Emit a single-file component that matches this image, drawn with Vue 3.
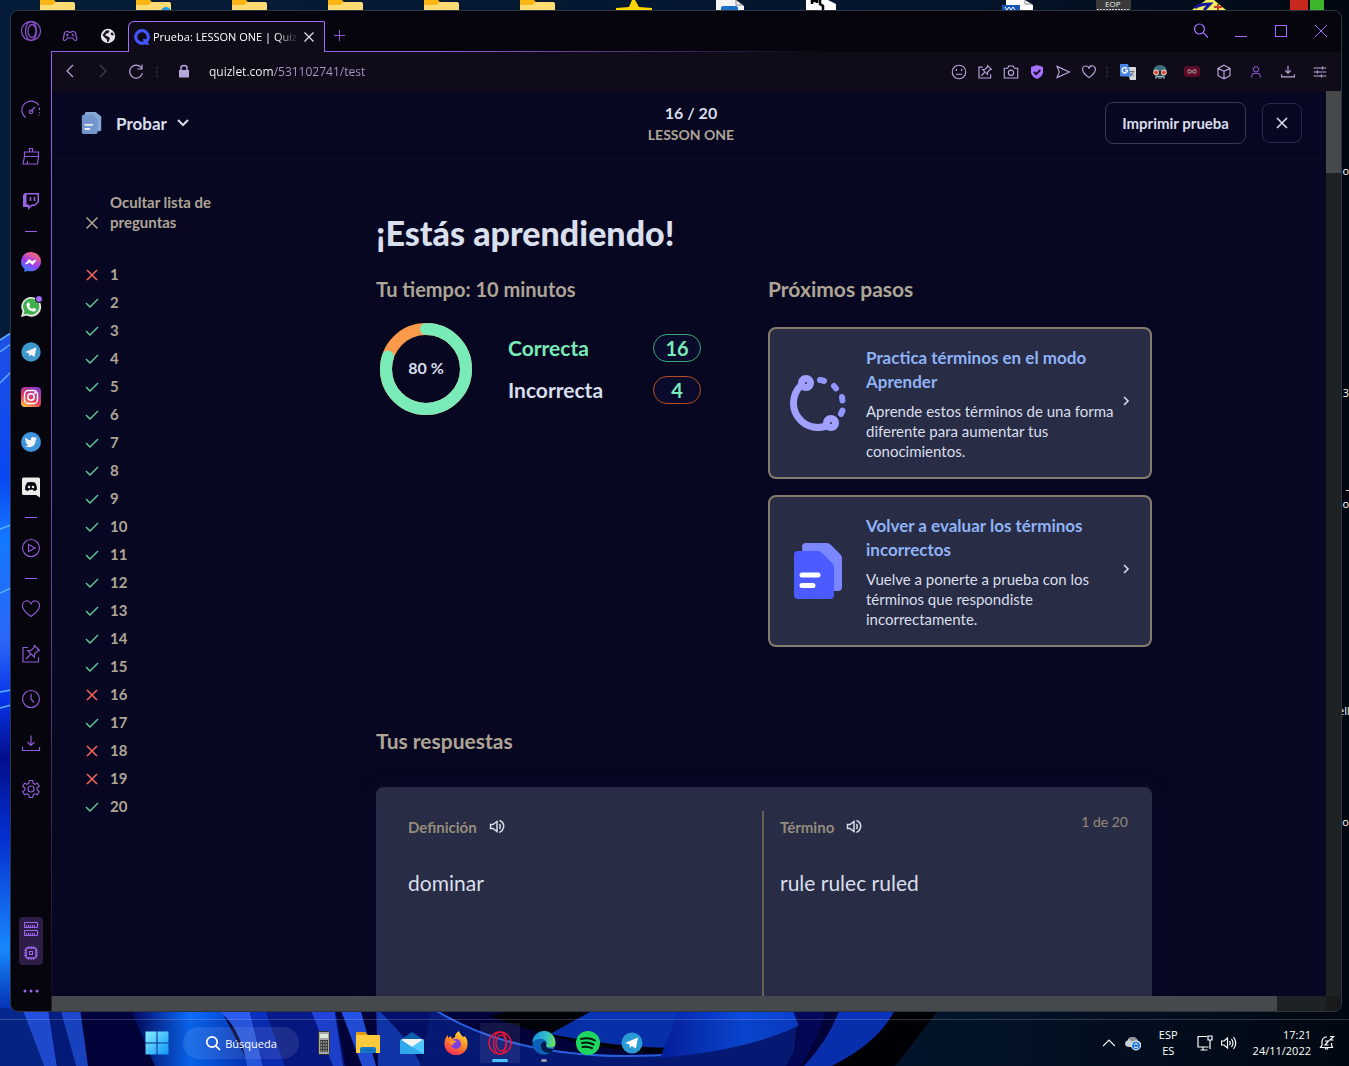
<script setup>
import { ref } from 'vue'

const address = ref('quizlet.com/531102741/test')

const wrong = [1, 16, 18, 19]
const questions = Array.from({ length: 20 }, (_, i) => ({
  n: i + 1,
  ok: !wrong.includes(i + 1),
}))

const folders = [1, 2, 3, 4, 5, 6]

const line = {
  speed: 'M7 18.6A9 9 0 1 1 19.6 6.4M20.4 8.5v2.500M20.500 13v1M20 15.500v1M12 12.500l4-4.500M10.200 12.800a1.800 1.800 0 1 0 3.600 0a1.800 1.800 0 1 0-3.600 0',
  broom: 'M10.500 8V4.500h3V8M5.500 8h14v4.500h-14zM5.500 12.500L4 20h14.500l1-7.500M8.500 17v3',
  play: 'M3.500 12a8.500 8.500 0 1 0 17 0a8.500 8.500 0 1 0-17 0M9.500 8.500v7l6.500-3.500z',
  heart: 'M12 19.500C5 14.500 3.500 11.500 3.500 9A4.300 4.300 0 0 1 12 7.500A4.300 4.300 0 0 1 20.500 9C20.500 11.500 19 14.500 12 19.500z',
  pin: 'M9 5.500H4v14.500h15.500V15M15.500 3.500l5 5l-2 .5l-2.800 2.800l-.4 3.400l-6.500-6.500l3.400-.4L15 5.500zM11.500 12.500L7 17',
  clock: 'M3.500 12a8.500 8.500 0 1 0 17 0a8.500 8.500 0 1 0-17 0M12 7v5l3 3.500',
  download: 'M12 3.500v9.500M8.500 10l3.500 3.500l3.500-3.500M3.500 15v3.500h17V15',
  gear: 'M10.300 3.500h3.400l.4 2.700l1.900 1.100l2.500-1l1.700 3l-2.100 1.700v2l2.100 1.700l-1.700 3l-2.500-1l-1.900 1.100l-.4 2.700h-3.400l-.4-2.700l-1.900-1.100l-2.500 1l-1.700-3l2.100-1.700v-2L3.800 9.300l1.700-3l2.500 1l1.900-1.100zM9 12a3 3 0 1 0 6 0a3 3 0 1 0-6 0',
  smile: 'M3 12a9 9 0 1 0 18 0a9 9 0 1 0-18 0M8.500 8v2.500M15.500 8v2.500M8 15h8',
  camera: 'M3 7h4.500l1.500-3h6l1.500 3H21v13H3zM8.500 13a3.500 3.500 0 1 0 7 0a3.500 3.500 0 1 0-7 0',
  send: 'M4 4.500L20.500 12L4 19.500L7 12z',
  cube: 'M12 3l8 4v10l-8 4l-8-4V7zM4 7l8 4l8-4M12 11v10',
  person: 'M8 8a4 4 0 1 0 8 0a4 4 0 1 0-8 0M5.500 20.500V18c0-3 2.500-4 6.500-4s6.500 1 6.500 4v2.500',
  sliders: 'M2.500 6h19M2.500 12h19M2.500 18h19M16 3.500v5M8 9.500v5M14 15.500v5',
}

const toolsA = ['smile', 'pin', 'camera']
const steps = [
  {
    icon: 'learn',
    title: 'Practica términos en el modo Aprender',
    text: 'Aprende estos términos de una forma diferente para aumentar tus conocimientos.',
  },
  {
    icon: 'test',
    title: 'Volver a evaluar los términos incorrectos',
    text: 'Vuelve a ponerte a prueba con los términos que respondiste incorrectamente.',
  },
]
const sides = [
  { label: 'Definición', value: 'dominar' },
  { label: 'Término', value: 'rule rulec ruled' },
]
</script>

<template>
  <div class="desktop">
    <svg class="wallpaper" viewBox="0 0 1349 1066" preserveAspectRatio="none" aria-hidden="true">
      <defs>
        <linearGradient id="sky" x1="0" y1="0" x2="1" y2="0">
          <stop offset="0" stop-color="#051d3a" /><stop offset="0.700" stop-color="#04152c" /><stop offset="1" stop-color="#020812" />
        </linearGradient>
        <linearGradient id="side" x1="0" y1="0" x2="0" y2="1">
          <stop offset="0" stop-color="#1f4fe6" /><stop offset="0.200" stop-color="#0a48f2" /><stop offset="0.280" stop-color="#1478ff" />
          <stop offset="0.420" stop-color="#2c66f8" /><stop offset="0.500" stop-color="#0734e8" /><stop offset="0.580" stop-color="#030f8c" />
          <stop offset="0.690" stop-color="#0530d0" /><stop offset="0.840" stop-color="#1888fb" /><stop offset="0.920" stop-color="#0534b8" /><stop offset="1" stop-color="#04268f" />
        </linearGradient>
        <linearGradient id="glow" x1="0" y1="0" x2="1" y2="0">
          <stop offset="0" stop-color="#03045a" /><stop offset="0.500" stop-color="#0a6cff" /><stop offset="1" stop-color="#0634c0" />
        </linearGradient>
        <linearGradient id="fold" x1="0" y1="0" x2="1" y2="0">
          <stop offset="0" stop-color="#0520a8" /><stop offset="0.600" stop-color="#0b4be0" /><stop offset="1" stop-color="#0a3fd0" />
        </linearGradient>
      </defs>
      <rect width="1349" height="1066" fill="url(#sky)" />
      <path d="M0 340L11 333V1066H0z" fill="url(#side)" />
      <path d="M0 340L11 333M0 352L11 344M0 383L11 372M0 529L11 525M0 593L11 588M0 692L11 690M0 708L11 705" stroke="#58b0ff" stroke-width="1.500" />
      <path d="M0 1008H940L895 1066H0z" fill="#02023c" />
      <path d="M0 1008H22L44 1066H0z" fill="#06268f" />
      <path d="M22 1008h26l9 58h-13z" fill="#2350e0" />
      <path d="M48 1008h12l16 58h-19z" fill="#041c84" />
      <path d="M60 1008h20l8 58h-12z" fill="#1b48cf" />
      <path d="M130 1008h90l30 58h-95z" fill="url(#glow)" />
      <path d="M215 1008h34l14 58h-16q-6-40-32-58z" fill="#2a5cf0" />
      <path d="M249 1008h16l20 58h-22z" fill="#0a2fc0" />
      <path d="M265 1008h70l10 58h-60z" fill="#071a8c" />
      <path d="M310 1008h24l9 58h-10z" fill="#2145dc" />
      <path d="M340 1008h20l16 58h-14z" fill="#2552e6" />
      <path d="M376 1008q30 26 46 58h-44z" fill="#1238b4" />
      <path d="M376 1008h56q90 60 248 52v6H422q-16-32-46-58z" fill="#03106e" />
      <path d="M520 1008h160v46q-90 0-190-38z" fill="#010208" />
      <path d="M590 1012h90v36q-60 0-130-14z" fill="#0733b8" />
      <path d="M432 1008q90 56 248 46q60-8 117-30l-4 42H420z" fill="#061a7c" />
      <path d="M432 1008q90 58 248 46" fill="none" stroke="#2a66f0" stroke-width="2" />
      <path d="M680 1008h112q8 8 6 18q-50 24-138 32z" fill="url(#fold)" />
      <path d="M798 1024q2 20-12 42h14q20-30 26-58h-34z" fill="#03085c" />
      <path d="M840 1008h56q-16 34-64 58h-28q26-28 36-58z" fill="#0a32bc" />
      <path d="M896 1008h44l-45 58h-63q48-24 64-58z" fill="#000003" />
    </svg>

    <div class="edge-labels" aria-hidden="true">
      <span style="top: 163px">o</span>
      <span style="top: 385px">3</span>
      <span style="top: 481px">-</span>
      <span style="top: 496px">o</span>
      <span style="top: 703px">ell</span>
      <span style="top: 814px">io</span>
    </div>

    <div class="shortcuts" aria-hidden="true">
      <svg v-for="f in folders" :key="f" viewBox="0 0 96 10">
        <path d="M30 0h14l3 3h15q3 0 3 3v4H30z" fill="#fbb615" />
        <path d="M30 5h12l4-3h17q2 0 2 2v6H30z" fill="#ffdc73" />
        <circle v-if="f === 2" cx="60" cy="12" r="5" fill="#1e9be0" />
      </svg>
      <svg viewBox="0 0 96 10"><path d="M30 8l13-1l3-7h3l4 7l13 1v2H30z" fill="#ffd500" /></svg>
      <svg viewBox="0 0 96 10"><path d="M34 0h20l8 6v4H34z" fill="#f4f4f4" /><path d="M54 0v5h7" fill="none" stroke="#888" /><rect x="39" y="6" width="17" height="6" rx="2" fill="#1d6fc9" /></svg>
      <svg viewBox="0 0 96 10"><path d="M28 0h22l8 4v6H28z" fill="#fff" /><path d="M34 4V1h5V3M42 0v4l3 2v4" fill="none" stroke="#000" stroke-width="2.500" /></svg>
      <svg viewBox="0 0 96 10"></svg>
      <svg viewBox="0 0 96 10"><path d="M36 0h19l8 5v5H36z" fill="#fff" /><path d="M55 0v4h7" fill="none" stroke="#888" /><rect x="32" y="5" width="18" height="6" fill="#1757b8" /><path d="M35 7l2 3l2-3l2 3l2-3l2 3" stroke="#fff" fill="none" /></svg>
      <svg viewBox="0 0 96 10"><rect x="30" width="35" height="10" fill="#3a3a3a" /><path d="M31 9.500h33" stroke="#ccc" stroke-dasharray="2 1" /><text x="39" y="7" font-size="8" fill="#eee">EOP</text></svg>
      <svg viewBox="0 0 96 10"><path d="M30 10L44 0h8l12 10z" fill="#f4ec5e" /><path d="M33 8q4-4 15-4l-6 6" fill="none" stroke="#16189a" stroke-width="3" /><path d="M56 4v6M52 7h8" stroke="#c0392b" stroke-width="2" /></svg>
      <svg viewBox="0 0 96 10"><rect x="32" width="18" height="10" fill="#c8281e" /><rect x="52" width="14" height="10" fill="#3fb52c" /></svg>
    </div>

    <div class="window">
      <nav class="rail" aria-label="Barra lateral">
        <a class="rail-logo" href="#" aria-label="Opera GX">
          <svg class="i22" viewBox="0 0 22 22" fill="none" stroke="#8450c4" stroke-width="1.300"><circle cx="11" cy="11" r="9.500" /><ellipse cx="11" cy="11" rx="5.500" ry="9.500" /><ellipse cx="12" cy="11" rx="4" ry="6.500" /></svg>
        </a>
        <a class="rail-item" href="#" aria-label="GX Control"><svg class="i24 ln" viewBox="0 0 24 24"><path :d="line.speed" /></svg></a>
        <a class="rail-item" href="#" aria-label="GX Cleaner"><svg class="i24 ln" viewBox="0 0 24 24"><path :d="line.broom" /></svg></a>
        <a class="rail-item" href="#" aria-label="Twitch">
          <svg class="i24" viewBox="0 0 24 24"><path d="M4 6l2-2h14v9l-4 4h-3l-4 4v-3H4z" fill="#9a62e4" /><path d="M7.500 5.500h11v7l-3 3h-3l-2 2v-2h-3z" fill="#06040c" /><path d="M11.500 8v4M15.500 8v4" stroke="#9a62e4" stroke-width="1.500" /></svg>
        </a>
        <span class="dash"></span>
        <a class="rail-item" href="#" aria-label="Messenger">
          <svg class="i24" viewBox="0 0 24 24"><defs><linearGradient id="ms" x1="0.200" y1="1" x2="0.700" y2="0"><stop offset="0" stop-color="#1f8fff" /><stop offset="0.450" stop-color="#9a3cf0" /><stop offset="1" stop-color="#ff6a70" /></linearGradient></defs><path d="M12 2a10 9.600 0 0 1 0 19.300q-2 0-3.500-.5L5.500 22v-3A9.700 9.700 0 0 1 12 2z" fill="url(#ms)" /><path d="M6.500 14l3.500-4.500l3 2.300l4-1.800l-3.300 4.500l-3-2.300z" fill="#fff" stroke="#fff" stroke-linejoin="round" /></svg>
        </a>
        <a class="rail-item" href="#" aria-label="WhatsApp">
          <svg class="i24" viewBox="0 0 24 24"><path d="M2 22l1.500-5.500A9.900 9.900 0 1 1 7.600 20.600z" fill="#e8e8e8" /><path d="M4.500 19.500l1-3.300a8.100 8.100 0 1 1 3 2.600z" fill="#3fb04d" /><path d="M8.500 7.500l1.500-.3l1.200 2.800l-1 1.200q1 2 3 2.800l1.300-1.300l2.600 1.300q0 2.500-2.800 2.600q-6-1-6.800-6.300q0-1.500 1-2.800z" fill="#fff" /><circle cx="20" cy="4" r="3.500" fill="#a56eff" stroke="#06040c" /></svg>
        </a>
        <a class="rail-item" href="#" aria-label="Telegram">
          <svg class="i24" viewBox="0 0 24 24"><circle cx="12" cy="12" r="9.700" fill="#3d97cc" /><path d="M6 12l11.500-4.700l-2 9.700l-3.500-2.300l-1.800 1.800l-.4-3.200z" fill="#f2f2f2" /></svg>
        </a>
        <a class="rail-item" href="#" aria-label="Instagram">
          <svg class="i24" viewBox="0 0 24 24"><defs><linearGradient id="ig" x1="0.200" y1="1" x2="0.700" y2="0"><stop offset="0" stop-color="#f8c14a" /><stop offset="0.400" stop-color="#ea3a58" /><stop offset="1" stop-color="#8a3ac8" /></linearGradient></defs><rect x="2" y="2" width="20" height="20" rx="4" fill="url(#ig)" /><rect x="5.500" y="5.500" width="13" height="13" rx="4" fill="none" stroke="#fff" stroke-width="1.500" /><circle cx="12" cy="12" r="3.200" fill="none" stroke="#fff" stroke-width="1.500" /><circle cx="16" cy="8" r="1" fill="#fff" /></svg>
        </a>
        <a class="rail-item" href="#" aria-label="Twitter">
          <svg class="i24" viewBox="0 0 24 24"><circle cx="12" cy="12" r="10" fill="#3d94dc" /><path d="M6.500 7.500q2.300 2.700 5.300 2.700q-.4-3 2.200-3.300q1.300 0 2 .8l1.700-.5l-1 1.500l1.300-.2l-1.300 1.400q0 7-6.700 7.300q-2.500 0-4.200-1.100q2.200 0 3.500-1.200q-1.700-.2-2.200-1.700h1q-2-.8-1.900-2.500l1 .2q-1.600-1.400-.7-3.400z" fill="#f2f2f2" /></svg>
        </a>
        <a class="rail-item" href="#" aria-label="Discord">
          <svg class="i24" viewBox="0 0 24 24"><path d="M4.500 2.500h15q1.500 0 1.500 1.500v18.500L17 20H4.500Q3 20 3 18.500V4q0-1.500 1.500-1.500z" fill="#ececec" /><path d="M8 7.500q4-1.200 8 0q2.200 3.300 2 7q-1.700 1.500-3.200 1.500l-.8-1.300h-4L9.200 16Q7.700 16 6 14.500q-.2-3.700 2-7z" fill="#06040c" /><circle cx="10" cy="12" r="1.300" fill="#ececec" /><circle cx="14" cy="12" r="1.300" fill="#ececec" /></svg>
        </a>
        <span class="dash"></span>
        <a class="rail-item" href="#" aria-label="Reproductor"><svg class="i24 ln" viewBox="0 0 24 24"><path :d="line.play" /></svg></a>
        <span class="dash"></span>
        <a v-for="name in ['heart', 'pin', 'clock', 'download', 'gear']" :key="name" class="rail-item" href="#" :aria-label="name">
          <svg class="i24 ln" viewBox="0 0 24 24"><path :d="line[name]" /></svg>
        </a>
        <div class="gauges">
          <svg class="i16" viewBox="0 0 16 16" fill="none" stroke="#9d68ee"><path d="M1.500 1.500h13v5h-13zM1.500 9.500h13v5h-13zM3.500 6V4M5.500 6V4M7.500 6V4M9.500 6V4M11.500 6V4M3.500 14v-2M5.500 14v-2M7.500 14v-2M9.500 14v-2M11.500 14v-2" /></svg>
          <svg class="i16" viewBox="0 0 16 16" fill="none" stroke="#9d68ee"><rect x="3" y="3" width="10" height="10" rx="1" stroke-width="1.500" /><rect x="6.500" y="6.500" width="3" height="3" /><path d="M5.500 1v2M8 1v2M10.500 1v2M5.500 13v2M8 13v2M10.500 13v2M1 5.500h2M1 8h2M1 10.500h2M13 5.500h2M13 8h2M13 10.500h2" /></svg>
        </div>
        <button class="rail-more" type="button" aria-label="Más"><svg class="i16" viewBox="0 0 16 16" fill="#9d68ee"><circle cx="2" cy="8" r="1.500" /><circle cx="8" cy="8" r="1.500" /><circle cx="14" cy="8" r="1.500" /></svg></button>
      </nav>

      <div class="frame">
        <header class="tabs">
          <div class="pinned">
            <button type="button" aria-label="GX Corner"><svg class="i16" viewBox="0 0 16 16" fill="none" stroke="#8d5cd0" stroke-width="1.200"><path d="M4.500 3.500h1.800l.8.800h1.800l.8-.8h1.800q1.500 0 2 1.500l1.200 5.500q.3 2-1.200 2q-1 0-1.800-1L10.500 10h-5L4.300 11.500q-.8 1-1.800 1q-1.500 0-1.200-2L2.500 5q.5-1.500 2-1.500zM5.300 5.500v3M3.800 7h3M9.500 7h1.500M11 5.500v3" /></svg></button>
            <button type="button" aria-label="Sitio web"><svg class="i16" viewBox="0 0 16 16"><circle cx="8" cy="8" r="7.200" fill="#e6e4ea" /><path d="M6 2.500l3.500 0l-1 2.500l-2 .5L5 7.500l3 1l2 1.500l-1 3l-2 1.500v-3L4.500 9.500L2.500 7zM12 4l2 3l-2 .5l-1.500-1.500z" fill="#15101f" /></svg></button>
          </div>
          <div class="tab">
            <svg class="i16" viewBox="0 0 16 16"><circle cx="8" cy="8" r="6.300" fill="none" stroke="#4255ff" stroke-width="3.200" /><path d="M8.500 10h3l4 5.800h-4z" fill="#4255ff" /></svg>
            <span class="tab-title">Prueba: LESSON ONE | Quiz</span>
            <button type="button" aria-label="Cerrar pestaña"><svg class="i12" viewBox="0 0 12 12" stroke="#e4e0ee" stroke-width="1.200"><path d="M1.500 1.500l9 9M10.500 1.500l-9 9" /></svg></button>
          </div>
          <div class="after-tab">
            <button type="button" aria-label="Nueva pestaña"><svg class="i12" viewBox="0 0 12 12" stroke="#8a58cc"><path d="M5.500 0v11M0 5.500h11" /></svg></button>
            <div class="controls">
              <button type="button" aria-label="Buscar pestañas"><svg class="i16" viewBox="0 0 16 16" fill="none" stroke="#a56eff" stroke-width="1.200"><circle cx="6.500" cy="6" r="5" /><path d="M10.200 9.700L15 14.500" /></svg></button>
              <button type="button" aria-label="Minimizar"><svg class="i12" viewBox="0 0 12 12" stroke="#a56eff"><path d="M0 11.500h12" /></svg></button>
              <button type="button" aria-label="Maximizar"><svg class="i12" viewBox="0 0 12 12" stroke="#a56eff" fill="none"><rect x="0.500" y="0.500" width="11" height="11" /></svg></button>
              <button type="button" aria-label="Cerrar"><svg class="i12" viewBox="0 0 12 12" stroke="#a56eff"><path d="M0 0l12 12M12 0L0 12" /></svg></button>
            </div>
          </div>
        </header>

        <div class="toolbar">
          <button type="button" aria-label="Atrás"><svg class="i16" viewBox="0 0 16 16" fill="none" stroke="#b7a9dd" stroke-width="1.200"><path d="M11 1L5 7l6 6" /></svg></button>
          <button type="button" aria-label="Adelante"><svg class="i16" viewBox="0 0 16 16" fill="none" stroke="#453c56" stroke-width="1.200"><path d="M5 1l6 6l-6 6" /></svg></button>
          <button type="button" aria-label="Recargar"><svg class="i16" viewBox="0 0 16 16" fill="none" stroke="#b7a9dd" stroke-width="1.200"><path d="M13.500 4A6.500 6.500 0 1 0 14.500 9M14 .5V5H9.500" /></svg></button>
          <span class="sep"></span>
          <svg class="i16 lock" viewBox="0 0 16 16"><path d="M3 6h10v7q0 .5-.5.500h-9q-.5 0-.5-.5z" fill="#b7a9dd" /><path d="M5 6.500V4q0-2.500 3-2.500t3 2.500v2.500" fill="none" stroke="#b7a9dd" stroke-width="1.500" /></svg>
          <input v-model="address" class="address" type="text" aria-label="Dirección" />
          <div class="tools">
            <button v-for="t in toolsA" :key="t" type="button" :aria-label="t"><svg class="i18 lt" viewBox="0 0 24 24"><path :d="line[t]" /></svg></button>
            <button type="button" aria-label="Bloqueador"><svg class="i16" viewBox="0 0 16 16"><path d="M8 1l6 2v5.500Q13.500 12.500 8 15Q2.500 12.500 2 8.500V3z" fill="#a56eff" /><path d="M5 8l2.200 2.200L11.300 6" fill="none" stroke="#150d24" stroke-width="1.800" /></svg></button>
            <button type="button" aria-label="Enviar"><svg class="i18 lt" viewBox="0 0 24 24"><path :d="line.send" /></svg></button>
            <button type="button" aria-label="Favoritos"><svg class="i18 lt" viewBox="0 0 24 24"><path :d="line.heart" /></svg></button>
          </div>
          <span class="sep"></span>
          <div class="extensions">
            <button type="button" aria-label="Traductor"><svg class="i16" viewBox="0 0 16 16"><path d="M6 3h9q1 0 1 1v12h-6z" fill="#d8d8d8" /><path d="M9.500 7.500h5M12 6.500v1M13.500 7.500q-1 3-3 4.500M11 9q1.500 2.500 3 3" stroke="#777" fill="none" /><path d="M0 0h8l3.500 12.500H1q-1 0-1-1z" fill="#4a86e8" /><path d="M7 4.700A2.700 2.700 0 1 0 7.500 6.500H5.200" fill="none" stroke="#fff" stroke-width="1.300" /></svg></button>
            <button type="button" aria-label="Extensión"><svg class="i16" viewBox="0 0 16 16"><path d="M1 7Q2 1 8 1t7 6z" fill="#3e6f7c" /><path d="M3 10h10v4H3z" fill="#264c58" /><circle cx="4.200" cy="8.500" r="2.500" fill="#d84a35" stroke="#f6e4da" /><circle cx="11.800" cy="8.500" r="2.500" fill="#d84a35" stroke="#f6e4da" /><path d="M4 15v-2.500h8V15M7 13v2M9 13v2" stroke="#8fb0b4" fill="none" /></svg></button>
            <button type="button" aria-label="Grabadora"><svg class="i16" viewBox="0 0 16 16"><rect y="2" width="16" height="11" rx="3" fill="#5c0d28" /><path d="M8 7.500q-4-3.500-4 0t4 0t4 0t-4 0" fill="none" stroke="#98707c" stroke-width="1.300" /></svg></button>
            <button type="button" aria-label="Extensiones"><svg class="i18 lt" viewBox="0 0 24 24"><path :d="line.cube" /></svg></button>
            <button type="button" aria-label="Perfil"><svg class="i16 lt vio" viewBox="0 0 24 24"><path :d="line.person" /></svg></button>
            <button type="button" aria-label="Descargas"><svg class="i18 lt" viewBox="0 0 24 24"><path :d="line.download" /></svg></button>
            <button type="button" aria-label="Configuración"><svg class="i16 lt" viewBox="0 0 24 24"><path :d="line.sliders" /></svg></button>
          </div>
        </div>

        <div class="viewport">
          <div class="page">
            <header class="top">
              <button class="mode" type="button">
                <svg class="i24" viewBox="0 0 24 26"><path d="M4 3q0-2 2-2h10l6 5v14q0 2-2 2H6z" fill="#86a8d4" /><path d="M1 6q0-2 2-2h10l5 5v14q0 2-2 2H3q-2 0-2-2z" fill="#7396cc" /><path d="M4 15h9M4 19.500h6" stroke="#e8edf6" stroke-width="2" /></svg>
                Probar
                <svg class="i12 chev" viewBox="0 0 12 12" fill="none" stroke="#d9dde8" stroke-width="2"><path d="M1 3l5 5l5-5" /></svg>
              </button>
              <div class="score">
                <strong>16 / 20</strong>
                <span>LESSON ONE</span>
              </div>
              <div class="actions">
                <button class="print" type="button">Imprimir prueba</button>
                <button class="close" type="button" aria-label="Cerrar"><svg class="i12" viewBox="0 0 12 12" stroke="#d9dde8" stroke-width="1.600"><path d="M1 1l10 10M11 1L1 11" /></svg></button>
              </div>
            </header>

            <div class="body">
              <aside class="list">
                <button class="hide" type="button">
                  <svg class="i16" viewBox="0 0 16 16" stroke="#aea596" stroke-width="1.500"><path d="M2.500 1.500l11 11M13.500 1.500l-11 11" /></svg>
                  <span>Ocultar lista de preguntas</span>
                </button>
                <ol>
                  <li v-for="q in questions" :key="q.n">
                    <svg v-if="q.ok" class="i16" viewBox="0 0 16 16" fill="none" stroke="#62cf9d" stroke-width="1.400"><path d="M2 9l4 4l8-8" /></svg>
                    <svg v-else class="i16" viewBox="0 0 16 16" stroke="#f0675c" stroke-width="1.600"><path d="M3 4l10 10M13 4L3 14" /></svg>
                    {{ q.n }}
                  </li>
                </ol>
              </aside>

              <main class="results">
                <h1>¡Estás aprendiendo!</h1>
                <div class="summary">
                  <section>
                    <p class="time">Tu tiempo: 10 minutos</p>
                    <div class="stats">
                      <div class="donut">
                        <svg viewBox="0 0 92 92" fill="none" stroke-width="12">
                          <circle cx="46" cy="46" r="40" stroke="#fa9a4a" />
                          <circle cx="46" cy="46" r="40" stroke="#78ebb8" stroke-linecap="round" stroke-dasharray="201 252" transform="rotate(-90 46 46)" />
                        </svg>
                        <span>80 %</span>
                      </div>
                      <dl>
                        <div class="good"><dt>Correcta</dt><dd>16</dd></div>
                        <div class="bad"><dt>Incorrecta</dt><dd>4</dd></div>
                      </dl>
                    </div>
                  </section>
                  <section>
                    <h2>Próximos pasos</h2>
                    <div class="steps">
                      <a v-for="s in steps" :key="s.icon" class="step" href="#">
                        <svg v-if="s.icon === 'learn'" class="i56" viewBox="0 0 56 56" fill="none">
                          <path d="M10.500 10.900A24.500 24.500 0 0 0 40 49.400" stroke="#9fa0ff" stroke-width="7" />
                          <path d="M30 5q2 0 4 1M44 11l2 2.500M52 22l.5 3.500M52.500 35.500l-1.500 3.500" stroke="#9195ff" stroke-width="6" stroke-linecap="round" />
                          <circle cx="16" cy="8" r="4.500" stroke="#9fa0ff" stroke-width="7" />
                          <circle cx="41" cy="48" r="4.500" stroke="#9fa0ff" stroke-width="7" />
                        </svg>
                        <svg v-else class="i56" viewBox="0 0 56 56">
                          <path d="M12 4q0-4 4-4h21q2 0 4 2l9 9q2 2 2 4v29q0 4-4 4H16z" fill="#7b87ff" />
                          <path d="M4 12q0-4 4-4h20q2 0 4 2l10 10q2 2 2 4v28q0 4-4 4H8q-4 0-4-4z" fill="#4c5bff" />
                          <path d="M12 32h16M12 42.500h11" stroke="#fff" stroke-width="5" stroke-linecap="round" />
                        </svg>
                        <span class="step-copy">
                          <strong>{{ s.title }}</strong>
                          <span>{{ s.text }}</span>
                        </span>
                        <svg class="i16" viewBox="0 0 16 16" fill="none" stroke="#d9dde8" stroke-width="1.600"><path d="M6 2l4 4l-4 4" /></svg>
                      </a>
                    </div>
                  </section>
                </div>

                <h2 class="answers-title">Tus respuestas</h2>
                <article class="answer">
                  <section v-for="side in sides" :key="side.label" class="side">
                    <h3>
                      {{ side.label }}
                      <button type="button" :aria-label="'Escuchar ' + side.label"><svg class="i16" viewBox="0 0 16 16" fill="none" stroke="#d9dde8" stroke-width="1.500"><path d="M1.500 5.500v4H4l4 3v-10l-4 3zM10.500 5q1.500 2.500 0 5M10.500 1.500q5 2 4 7q-.8 3.500-4 5" /></svg></button>
                    </h3>
                    <p>{{ side.value }}</p>
                  </section>
                  <span class="count">1 de 20</span>
                </article>
              </main>
            </div>
          </div>
          <div class="vbar"><span></span></div>
          <div class="hbar"><span></span></div>
          <div class="corner"></div>
        </div>
      </div>
    </div>

    <footer class="taskbar">
      <button class="app" type="button" aria-label="Inicio"><svg class="i24" viewBox="0 0 24 24"><defs><linearGradient id="win" x1="0" y1="0" x2="1" y2="1"><stop offset="0" stop-color="#8af0ff" /><stop offset="1" stop-color="#0a94f5" /></linearGradient></defs><path d="M0.500 0.500h11v11h-11zM12.500 0.500h11v11h-11zM0.500 12.500h11v11h-11zM12.500 12.500h11v11h-11z" fill="url(#win)" /></svg></button>
      <button class="search" type="button"><svg class="i16" viewBox="0 0 16 16" fill="none" stroke="#fff" stroke-width="1.700"><circle cx="7" cy="7" r="5.200" /><path d="M10.800 10.800L15 15" /></svg>Búsqueda</button>
      <button class="app" type="button" aria-label="Calculadora"><svg class="i24" viewBox="0 0 24 24"><rect x="6.500" y="0.500" width="11" height="23" rx="1" fill="#a7a7a7" stroke="#333" /><rect x="8" y="3" width="8" height="4" fill="#dfe8d8" /><rect x="8" y="9" width="8" height="12" fill="#3b3b3b" /><path d="M8.500 11h7M8.500 14h7M8.500 17h7M8.500 20h7" stroke="#ddd" stroke-dasharray="1.500 1" /></svg></button>
      <button class="app" type="button" aria-label="Explorador"><svg class="i24" viewBox="0 0 24 24"><path d="M0 2q0-1 1-1h8l3 3h-12z" fill="#e29a12" /><path d="M0 4h23q1 0 1 1v17H0z" fill="#ffcb3d" /><path d="M4 22v-4q0-2 2-2h12q2 0 2 2v4z" fill="#1678c8" /><path d="M8 19h8" stroke="#0b5596" /></svg></button>
      <button class="app" type="button" aria-label="Correo"><svg class="i24" viewBox="0 0 24 24"><path d="M0 9l12-8l12 8z" fill="#0c5ea8" /><path d="M2 8h20v8H2z" fill="#f4f4f4" /><path d="M0 8l12 8l12-8v15H0z" fill="#2fa8ec" /><path d="M24 8v15L12 16z" fill="#53c9fb" /></svg></button>
      <button class="app" type="button" aria-label="Firefox"><svg class="i24" viewBox="0 0 24 24"><defs><linearGradient id="ff" x1="0.800" y1="0" x2="0.300" y2="1"><stop offset="0" stop-color="#ffe23c" /><stop offset="0.500" stop-color="#ff8a1f" /><stop offset="1" stop-color="#f5255c" /></linearGradient></defs><path d="M15 0q2 5 5 6l1-1q3 4 2.500 8.500A11.500 11 0 0 1 0.500 13Q0.500 7 4 4v3l3-2l1 3l3-2q0-4 4-6z" fill="url(#ff)" /><circle cx="12" cy="13" r="5" fill="#7b3fe4" /><path d="M6 10q4-2 7 1q-4 0-4 3q-3 0-3-4z" fill="#ff9a2a" /></svg></button>
      <button class="app active" type="button" aria-label="Opera GX"><svg class="i24" viewBox="0 0 24 24" fill="none" stroke="#e0173f" stroke-width="1.500"><circle cx="12" cy="12" r="11" /><ellipse cx="12" cy="12" rx="6.500" ry="11" /><ellipse cx="13" cy="12" rx="5" ry="8" /></svg></button>
      <button class="app open" type="button" aria-label="Edge"><svg class="i24" viewBox="0 0 24 24"><defs><linearGradient id="ed" x1="0" y1="0.300" x2="1" y2="0.500"><stop offset="0" stop-color="#1b8ee0" /><stop offset="0.600" stop-color="#35c2c8" /><stop offset="1" stop-color="#6ae05a" /></linearGradient></defs><circle cx="12" cy="12" r="11.500" fill="#0d62b8" /><path d="M0.500 11A11.500 11.500 0 0 1 23.500 12q0 4.500-5 4.500q-4 0-4.500-2q2-3-1-5.500Q7 5.500 0.500 11z" fill="url(#ed)" /><path d="M14 14.500q0 4 8 3.500q-2 3-5 4q-8-1-8-7q0-3 3-4.500q3 1 2 4z" fill="#021b4a" /></svg></button>
      <button class="app" type="button" aria-label="Spotify"><svg class="i24" viewBox="0 0 24 24"><circle cx="12" cy="12" r="12" fill="#1ed760" /><path d="M5 8q8-2 14 1.500M6 12q6-1.500 11.500 1.500M6.500 16q5-1 9.500 1.200" fill="none" stroke="#04150a" stroke-width="2" stroke-linecap="round" /></svg></button>
      <button class="app" type="button" aria-label="Telegram"><svg class="i24" viewBox="0 0 24 24"><circle cx="12" cy="12" r="10.500" fill="#2a9bd6" /><path d="M5 12l13-5.500l-2.200 11l-4-2.500l-2 2l-.4-3.800z" fill="#fff" /></svg></button>

      <div class="tray">
        <button type="button" aria-label="Iconos ocultos"><svg class="i12" viewBox="0 0 12 12" fill="none" stroke="#fff" stroke-width="1.200"><path d="M0 9l6-6l6 6" /></svg></button>
        <button type="button" aria-label="OneDrive"><svg class="i16" viewBox="0 0 16 16"><path d="M3.500 12Q0 11.500 0 8.500q0-2.500 2.500-3Q3.500 2 7.500 2T13 6q2.500 0 3 3v3z" fill="#c9ccd0" /><path d="M4 5q1-3 4-3t5 4q-4-1-5 1q-2-2-4-2z" fill="#8d9196" /><circle cx="11" cy="10.500" r="4.500" fill="#1c78d4" stroke="#fff" /><path d="M8.800 10q1-2 3.200-1.200l1 .8M13.200 11.500q-1 1.800-3.200 1l-1-.8" fill="none" stroke="#fff" /></svg></button>
        <button class="lang" type="button">ESP<br />ES</button>
        <button type="button" aria-label="Red"><svg class="i16" viewBox="0 0 16 16" fill="none" stroke="#fff" stroke-width="1.200"><path d="M10 1.500H1v10.500h10.500M6 12v3M3.500 15h7M11 1h4v4h-4zM13 5v9" /></svg></button>
        <button type="button" aria-label="Volumen"><svg class="i16" viewBox="0 0 16 16" fill="none" stroke="#fff" stroke-width="1.200"><path d="M0.500 6v4h2.500l3.500 3V3L3 6zM8.500 6q1.500 2 0 4M10.500 4q3 4 0 8M12.500 2q4.500 6 0 12" /></svg></button>
        <button class="clock" type="button">17:21<br />24/11/2022</button>
        <button type="button" aria-label="Notificaciones"><svg class="i16" viewBox="0 0 16 16" fill="none" stroke="#fff" stroke-width="1.200"><path d="M8 2q-5 0-5 5v3l-1.500 2.500h12L12.500 10V8M6 13q1.500 2.500 3 0M6 6h3.500L6 10h3.500M11 1.500h3.500L11 5h3.500" /></svg></button>
      </div>
    </footer>
  </div>
</template>

<style>
body {
  margin: 0;
  background: #020812;
}
</style>

<style scoped>
* {
  box-sizing: border-box;
}
button {
  display: flex;
  align-items: center;
  justify-content: center;
  margin: 0;
  padding: 0;
  border: 0;
  background: none;
  color: inherit;
  font: inherit;
}
a {
  color: inherit;
  text-decoration: none;
}
h1,
h2,
h3,
p,
ol,
dl,
dd {
  margin: 0;
  padding: 0;
}
svg {
  display: block;
  flex: none;
}
.i12 { width: 12px; height: 12px; }
.i16 { width: 16px; height: 16px; }
.i18 { width: 18px; height: 18px; }
.i22 { width: 22px; height: 22px; }
.i24 { width: 24px; height: 24px; }
.i56 { width: 56px; height: 56px; }
.ln { fill: none; stroke: #8f5bd6; stroke-width: 1.2; }
.lt { fill: none; stroke: #b7a9dd; stroke-width: 1.5; }
.lt.vio { stroke: #9a5fe6; }

.desktop {
  position: relative;
  display: flex;
  flex-direction: column;
  height: 100vh;
  overflow: hidden;
  isolation: isolate;
  color: #fff;
  font-family: 'Open Sans', 'Noto Sans', sans-serif;
  font-size: 12px;
}
.wallpaper {
  position: absolute;
  inset: 0;
  z-index: -2;
  width: 100%;
  height: 100%;
}
.edge-labels span {
  position: absolute;
  right: 0;
  z-index: -1;
  width: 11px;
  font-size: 11px;
  line-height: 16px;
  text-align: right;
}
.shortcuts {
  display: flex;
  height: 10px;
  padding-left: 10px;
  overflow: hidden;
}
.shortcuts svg {
  width: 96px;
  height: 10px;
}

.window {
  display: flex;
  flex: 1;
  min-height: 0;
  margin: 0 7px 7px 10px;
  overflow: hidden;
  border: 1px solid #2c3540;
  border-radius: 8px;
  background: #06040c;
}
.rail {
  display: flex;
  flex: none;
  flex-direction: column;
  align-items: center;
  width: 40px;
}
.rail-logo {
  display: flex;
  align-items: center;
  height: 40px;
  margin-bottom: 37px;
}
.rail-item {
  display: flex;
  align-items: center;
  height: 45px;
}
.dash {
  width: 12px;
  height: 16px;
  background: linear-gradient(#9a62e4, #9a62e4) center / 12px 1px no-repeat;
}
.gauges {
  display: flex;
  flex-direction: column;
  justify-content: space-around;
  align-items: center;
  width: 24px;
  height: 48px;
  margin-top: auto;
  border-radius: 4px;
  background: #2d1d47;
}
.rail-more {
  width: 40px;
  height: 40px;
  margin-top: 6px;
}

.frame {
  display: flex;
  flex: 1;
  flex-direction: column;
  min-width: 0;
}
.tabs {
  display: flex;
  height: 41px;
}
.pinned {
  display: flex;
  align-items: flex-end;
  width: 77px;
  border-bottom: 1px solid #9a62e4;
}
.pinned button {
  width: 38px;
  height: 30px;
}
.tab {
  display: flex;
  align-items: center;
  width: 197px;
  margin-top: 10px;
  padding: 0 9px 0 5px;
  border: 1px solid #a56eff;
  border-bottom: 0;
  border-radius: 6px 2px 0 0;
  background: #0f0b19;
}
.tab-title {
  flex: 1;
  margin: 0 4px 0 3px;
  font-size: 11px;
  line-height: 16px;
  white-space: nowrap;
  mask-image: linear-gradient(90deg, #000 84%, transparent 100%);
}
.after-tab {
  display: flex;
  flex: 1;
  justify-content: space-between;
  background: linear-gradient(90deg, #9a62e4, #9a62e4 10%, transparent 50%) bottom / 100% 1px no-repeat;
}
.after-tab > button {
  width: 30px;
  margin-top: 8px;
}
.controls {
  display: flex;
}
.controls button {
  width: 40px;
  height: 40px;
}

.toolbar {
  display: flex;
  align-items: center;
  height: 39px;
  padding-left: 1px;
  border-left: 1px solid #9a62e4;
  background: #0f0b19;
}
.toolbar > button {
  width: 33px;
  height: 32px;
}
.sep {
  width: 2px;
  height: 10px;
  margin: 0 4px;
  background: repeating-linear-gradient(#2a2340 0 2px, transparent 2px 4px);
}
.lock {
  margin: 0 17px 0 14px;
}
.address {
  flex: 1;
  min-width: 0;
  margin: 0;
  padding: 0;
  border: 0;
  outline: 0;
  background: linear-gradient(90deg, #fff 65px, #a79bc6 65px);
  background-clip: text;
  -webkit-text-fill-color: transparent;
  font: inherit;
}
.tools {
  display: flex;
}
.tools button {
  width: 26px;
  height: 32px;
}
.extensions {
  display: flex;
  padding-right: 5px;
}
.extensions button {
  width: 32px;
  height: 32px;
}

.viewport {
  display: grid;
  flex: 1;
  grid-template-columns: minmax(0, 1fr) 15px;
  grid-template-rows: minmax(0, 1fr) 15px;
  min-height: 0;
}
.page {
  overflow: hidden;
  border-left: 1px solid;
  border-image: linear-gradient(#9a62e4, #5f3f90 60%, #120c20) 1;
  background: #070721;
  color: #d9dfec;
  font-family: Lato, 'Open Sans', sans-serif;
}
.vbar {
  background: #1f2224;
}
.vbar span {
  display: block;
  height: 82px;
  background: #46494b;
}
.hbar {
  padding-left: 1px;
  background: #1f2224;
}
.hbar span {
  display: block;
  width: calc(100% - 49px);
  height: 15px;
  background: #46494b;
}
.corner {
  background: #191a1b;
}

.top {
  display: grid;
  grid-template-columns: 1fr auto 1fr;
  align-items: center;
  height: 64px;
  padding: 0 24px 0 28px;
  box-shadow: 0 2px 8px #0d0d23;
}
.mode {
  justify-self: start;
  gap: 12px;
  font-size: 17px;
  font-weight: 700;
}
.chev {
  margin-left: -2px;
}
.score {
  display: flex;
  flex-direction: column;
  align-items: center;
  padding-top: 2px;
  font-size: 14px;
  line-height: 22px;
}
.score strong {
  font-size: 16px;
}
.score span {
  color: #aea596;
  font-weight: 700;
}
.actions {
  display: flex;
  justify-content: flex-end;
  align-items: center;
  gap: 16px;
}
.print {
  height: 42px;
  padding: 0 16px;
  border: 1px solid #343a50;
  border-radius: 8px;
  font-size: 15px;
  font-weight: 700;
}
.close {
  width: 40px;
  height: 40px;
  border: 1px solid #282e4a;
  border-radius: 8px;
}

.body {
  display: flex;
}
.list {
  flex: none;
  width: 324px;
  padding: 37px 0 0 32px;
  color: #aea596;
  font-size: 15px;
  font-weight: 700;
  line-height: 20px;
}
.hide {
  align-items: flex-end;
  gap: 10px;
  text-align: left;
}
.hide span {
  width: 120px;
}
.list ol {
  margin-top: 28px;
  list-style: none;
}
.list li {
  display: flex;
  align-items: center;
  gap: 10px;
  height: 28px;
}
.results {
  flex: 0 1 776px;
  padding-top: 58px;
}
h1 {
  font-size: 34px;
  font-weight: 900;
  line-height: 40px;
}
h2,
.time {
  color: #aea596;
  font-size: 21px;
  font-weight: 700;
  line-height: 28px;
}
.time {
  font-size: 20px;
}
.summary {
  display: grid;
  grid-template-columns: 1fr 1fr;
  gap: 8px;
  margin-top: 22px;
}
.stats {
  display: flex;
  gap: 36px;
  padding: 20px 0 0 4px;
}
.donut {
  display: grid;
  place-items: center;
  width: 92px;
  height: 92px;
}
.donut > * {
  grid-area: 1 / 1;
}
.donut span {
  padding-bottom: 3px;
  font-size: 16px;
  font-weight: 700;
}
.stats dl {
  display: flex;
  flex-direction: column;
  gap: 14px;
  width: 193px;
  padding-top: 11px;
  font-size: 21px;
  font-weight: 700;
}
.stats dl div {
  display: flex;
  justify-content: space-between;
  line-height: 28px;
}
.stats dd {
  width: 48px;
  height: 28px;
  border: 1px solid #3aa876;
  border-radius: 14px;
  background: #0a0a2c;
  color: #78ebb8;
  font-size: 20px;
  line-height: 26px;
  text-align: center;
}
.good dt {
  color: #78ebb8;
}
.bad dd {
  border-color: #b5501c;
}
.steps {
  display: flex;
  flex-direction: column;
  gap: 16px;
  margin-top: 24px;
}
.step {
  display: flex;
  align-items: center;
  gap: 20px;
  min-height: 152px;
  padding: 16px 16px 16px 20px;
  border: 2px solid #857b6c;
  border-radius: 8px;
  background: #282c44;
}
.step > .i16 {
  margin-left: -20px;
}
.step-copy {
  flex: 1;
  font-size: 15px;
  line-height: 20px;
}
.step-copy strong {
  display: block;
  margin-bottom: 7px;
  color: #8fb3f7;
  font-size: 17px;
  line-height: 24px;
}
.step-copy span {
  display: block;
}
.answers-title {
  margin-top: 80px;
}
.answer {
  position: relative;
  display: flex;
  min-height: 320px;
  margin-top: 32px;
  padding: 24px 24px 24px 32px;
  border-radius: 8px;
  background: #282c44;
  box-shadow: 0 0 16px #0e0c28;
}
.side {
  flex: 0 0 354px;
  padding-top: 6px;
}
.side + .side {
  flex: 1;
  padding-left: 16px;
  border-left: 2px solid #665f58;
}
.side h3 {
  display: flex;
  align-items: center;
  gap: 12px;
  color: #948b7d;
  font-size: 15px;
  line-height: 20px;
}
.side p {
  margin-top: 32px;
  font-size: 21px;
  line-height: 28px;
}
.count {
  position: absolute;
  top: 25px;
  right: 24px;
  color: #948b7d;
  font-size: 14px;
  line-height: 20px;
}

.taskbar {
  display: flex;
  flex: none;
  align-items: center;
  height: 47px;
  padding: 0 14px 0 135px;
  border-top: 1px solid #ffffff30;
  background: #00081018;
  font-size: 11px;
}
.app {
  position: relative;
  width: 44px;
  height: 46px;
}
.active {
  background: linear-gradient(#ffffff14, #ffffff14) center / 40px 40px no-repeat;
}
.active::after,
.open::after {
  position: absolute;
  bottom: 4px;
  width: 6px;
  height: 3px;
  border-radius: 2px;
  background: #8d94a6;
  content: '';
}
.active::after {
  width: 16px;
  background: #4cc2ff;
}
.search {
  gap: 4px;
  width: 116px;
  height: 32px;
  margin: 0 3px 0 4px;
  border-radius: 16px;
  background: #ffffff18;
}
.tray {
  display: flex;
  align-items: center;
  gap: 8px;
  margin-left: auto;
  line-height: 16px;
}
.tray button {
  min-width: 16px;
}
.lang {
  padding: 0 11px 0 10px;
}
.clock {
  padding-left: 8px;
  text-align: right;
}
</style>
